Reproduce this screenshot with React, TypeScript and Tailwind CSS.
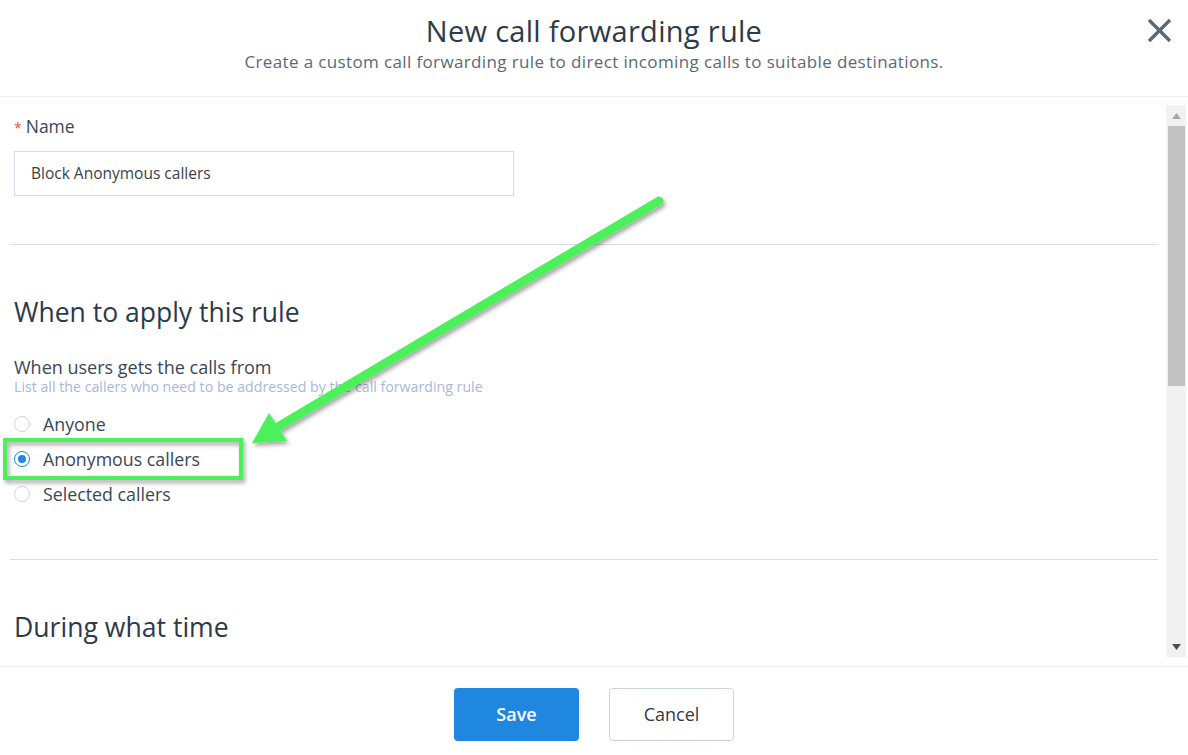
import React from "react";

const font = { fontFamily: "'Open Sans', Lato, sans-serif" };

function Radio({ checked, label }: { checked?: boolean; label: string }) {
  return (
    <div className="flex h-[35px] items-center">
      {checked ? (
        <span className="flex h-[16px] w-[16px] items-center justify-center rounded-full border-[1.5px] border-[#2087e0] bg-white">
          <span className="h-[8px] w-[8px] rounded-full bg-[#2087e0]" />
        </span>
      ) : (
        <span className="h-[16px] w-[16px] rounded-full border border-[#cdd5e2] bg-white" />
      )}
      <span className="ml-[13px] text-[17.8px] leading-[22px] text-[#3a4758]">{label}</span>
    </div>
  );
}

export default function App() {
  return (
    <div className="relative flex h-[755px] w-[1188px] flex-col overflow-hidden bg-white" style={font}>
      {/* Header */}
      <div className="relative flex h-[97px] shrink-0 flex-col items-center border-b border-[#eef0f4] pt-[13px]">
        <div className="text-[29px] leading-[36px] tracking-[0.3px] text-[#2c3a4b]">New call forwarding rule</div>
        <div className="mt-[2px] text-[17px] leading-[22px] tracking-[0.37px] text-[#5c6877]">
          Create a custom call forwarding rule to direct incoming calls to suitable destinations.
        </div>
        <button className="absolute left-[1146px] top-[17px] h-[27px] w-[27px]">
          <svg viewBox="0 0 27 27" width="27" height="27">
            <path d="M3 3 L24 24 M24 3 L3 24" stroke="#5b6876" strokeWidth="3.4" strokeLinecap="butt" />
          </svg>
        </button>
      </div>

      {/* Body */}
      <div className="flex min-h-0 flex-1">
        <div className="min-w-0 flex-1 overflow-hidden pl-[10px] pr-[8px] pt-[18px]">
          <div className="pl-[4px]">
            <div className="flex items-baseline text-[17.5px] leading-[23px] text-[#3a4758]">
              <span className="mr-[4px] text-[14px] text-[#f0504f]">*</span>
              <span>Name</span>
            </div>
            <div className="mt-[12px] flex h-[45px] w-[500px] items-center border border-[#d3d9e8] pl-[16px] text-[15.5px] text-[#3b3f47]">
              Block Anonymous callers
            </div>
          </div>
          <div className="mt-[48px] h-px bg-[#d5dbee]" />

          <div className="pl-[4px]">
            <div className="mt-[51px] text-[26.5px] leading-[32px] text-[#2c3a4b]">When to apply this rule</div>
            <div className="mt-[29px] text-[18px] leading-[21px] text-[#3a4758]">When users gets the calls from</div>
            <div className="text-[14.2px] leading-[18px] text-[#a9b8d6]">
              List all the callers who need to be addressed by the call forwarding rule
            </div>
            <div className="mt-[10px] flex flex-col">
              <Radio label="Anyone" />
              <Radio label="Anonymous callers" checked />
              <Radio label="Selected callers" />
            </div>
          </div>
          <div className="mt-[48px] h-px bg-[#d5dbee]" />

          <div className="pl-[4px]">
            <div className="mt-[51px] text-[26.6px] leading-[32px] text-[#2c3a4b]">During what time</div>
          </div>
        </div>

        {/* Scrollbar */}
        <div className="mb-[9px] mr-[2px] mt-[8px] flex w-[20px] shrink-0 flex-col items-center bg-[#f1f1f1]">
          <div className="flex h-[21px] w-full items-center justify-center">
            <svg width="9" height="6" viewBox="0 0 9 6">
              <path d="M0 6 L4.5 0 L9 6 Z" fill="#a8a8a8" />
            </svg>
          </div>
          <div className="h-[260px] w-[17px] bg-[#c1c1c1]" />
          <div className="flex-1" />
          <div className="flex h-[21px] w-full items-center justify-center">
            <svg width="9" height="6" viewBox="0 0 9 6">
              <path d="M0 0 L9 0 L4.5 6 Z" fill="#505050" />
            </svg>
          </div>
        </div>
      </div>

      {/* Footer */}
      <div className="flex h-[89px] shrink-0 justify-center gap-[30px] border-t border-[#eef0f4] pt-[21px]">
        <button className="h-[53px] w-[125px] rounded-[4px] bg-[#2087e0] text-[18px] font-semibold text-white">Save</button>
        <button className="h-[53px] w-[125px] rounded-[4px] border border-[#c9d3e6] bg-white text-[18px] text-[#333a44]">
          Cancel
        </button>
      </div>

      {/* Annotation overlay */}
      <svg className="pointer-events-none absolute left-0 top-0" width="1188" height="755">
        <defs>
          <filter id="sh" x="-20%" y="-20%" width="140%" height="140%">
            <feDropShadow dx="2" dy="3" stdDeviation="2" floodColor="#000" floodOpacity="0.35" />
          </filter>
        </defs>
        <g filter="url(#sh)">
          <rect x="5" y="440" width="236" height="38" fill="none" stroke="#4cf05a" strokeWidth="4" />
          <line x1="659" y1="201" x2="276" y2="428" stroke="#4cf05a" strokeWidth="9" strokeLinecap="round" />
          <polygon points="252,443 269,413 287,441" fill="#4cf05a" />
        </g>
      </svg>
    </div>
  );
}
